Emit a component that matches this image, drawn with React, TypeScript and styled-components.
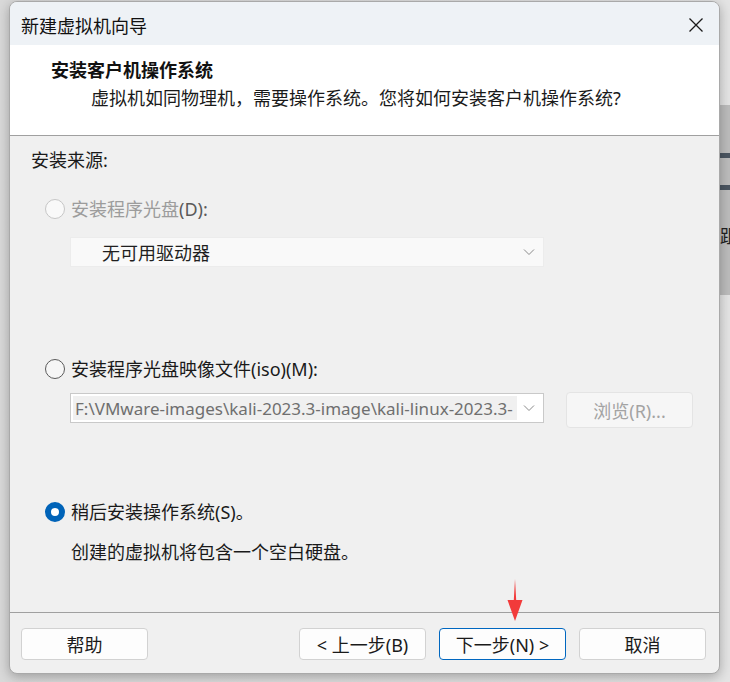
import React from "react";
import styled, { createGlobalStyle, css } from "styled-components";

const GlobalStyle = createGlobalStyle`
  html, body { margin: 0; padding: 0; }
  body {
    background: #e2e2e2;
    font-family: "Noto Sans", "Noto Sans CJK SC", sans-serif;
  }
  * { box-sizing: border-box; }
`;

const FONT = `"Noto Sans", "Noto Sans CJK SC", sans-serif`;

const Page = styled.div`
  position: relative;
  width: 730px;
  height: 682px;
  overflow: hidden;
  padding: 1px 0 0 9px;
  background: linear-gradient(90deg, #d9d9d9 0%, #e4e4e4 100%);
`;

const BackWindow = styled.div`
  position: absolute;
  left: 719px;
  top: 105px;
  width: 11px;
  height: 190px;
  overflow: hidden;
  background: #bcbcbc;
  display: flex;
  flex-direction: column;
  padding-top: 48px;
`;

const BackBar = styled.div<{ $mt: number }>`
  height: 5px;
  flex: none;
  margin-top: ${(p) => p.$mt}px;
  background: #4b5661;
`;

const BackGlyph = styled.div`
  margin-top: 33px;
  padding-left: 1px;
  font-family: "Noto Sans CJK SC", sans-serif;
  font-size: 18px;
  line-height: 24px;
  color: #222;
  white-space: nowrap;
`;

const Window = styled.div`
  position: relative;
  z-index: 1;
  width: 711px;
  height: 673px;
  border: 1px solid #a9a9a9;
  border-radius: 8px;
  overflow: hidden;
  display: flex;
  flex-direction: column;
  background: #f0f0f0;
  box-shadow: 0 3px 12px rgba(0, 0, 0, 0.28);
  font-family: ${FONT};
  color: #1a1a1a;
`;

const TitleBar = styled.div`
  height: 43px;
  flex: none;
  background: #eef2f6;
  display: flex;
  align-items: center;
  justify-content: space-between;
  padding: 2px 14px 0 11px;
`;

const TitleText = styled.div`
  font-family: "Noto Sans CJK SC", sans-serif;
  font-size: 18px;
  line-height: 24px;
  color: #111;
`;

const CloseButton = styled.div`
  width: 18px;
  height: 18px;
  display: flex;
  align-items: center;
  justify-content: center;
`;

const Header = styled.div`
  height: 91px;
  flex: none;
  background: #ffffff;
  border-bottom: 1px solid #a0a0a0;
  padding: 12px 0 0 41px;
  display: flex;
  flex-direction: column;
  gap: 5px;
`;

const HeaderTitle = styled.div`
  font-family: "Noto Sans CJK SC", sans-serif;
  font-size: 18px;
  font-weight: 700;
  line-height: 24px;
  color: #111;
`;

const HeaderSub = styled.div`
  font-size: 18px;
  line-height: 24px;
  padding-left: 40px;
  color: #1a1a1a;
`;

const Body = styled.div`
  flex: 1;
  padding: 12px 0 0 21px;
  display: flex;
  flex-direction: column;
`;

const Text = styled.div<{ $mt?: number; $indent?: number }>`
  font-size: 18px;
  line-height: 24px;
  margin-top: ${(p) => p.$mt ?? 0}px;
  padding-left: ${(p) => p.$indent ?? 0}px;
  color: #1a1a1a;
`;

const RadioRow = styled.div<{ $mt: number; $disabled?: boolean }>`
  display: flex;
  align-items: center;
  height: 24px;
  margin-top: ${(p) => p.$mt}px;
  padding-left: 14px;
  gap: 6px;
  font-size: 18px;
  line-height: 24px;
  color: ${(p) => (p.$disabled ? "#9c9c9c" : "#1a1a1a")};
`;

const Radio = styled.span<{ $state: "disabled" | "off" | "on" }>`
  width: 20px;
  height: 20px;
  border-radius: 50%;
  flex: none;
  ${(p) =>
    p.$state === "disabled"
      ? css`
          border: 1px solid #c6c6c6;
          background: #f9f9f9;
        `
      : p.$state === "off"
      ? css`
          border: 1px solid #5a5a5a;
          background: #f6f6f6;
        `
      : css`
          border: 6.5px solid #0063b8;
          background: #ffffff;
        `}
`;

const SubLabel = styled.span<{ $dark?: boolean }>`
  color: ${(p) => (p.$dark ? "#5a5a5a" : "inherit")};
`;

const ComboRow = styled.div<{ $mt: number }>`
  display: flex;
  align-items: flex-start;
  margin-top: ${(p) => p.$mt}px;
  padding-left: 39px;
  gap: 22px;
`;

const Combo = styled.div<{ $disabled?: boolean; $mt?: number }>`
  width: 474px;
  height: 30px;
  margin-top: ${(p) => p.$mt ?? 0}px;
  display: flex;
  align-items: center;
  padding: 2px 8px 2px 2px;
  border: 1px solid ${(p) => (p.$disabled ? "#ececec" : "#c9c9c9")};
  background: ${(p) => (p.$disabled ? "#f9f9f9" : "#ffffff")};
`;

const ComboValue = styled.div<{ $muted?: boolean; $field?: boolean }>`
  flex: ${(p) => (p.$field ? "none" : "1")};
  width: ${(p) => (p.$field ? "444px" : "auto")};
  height: 100%;
  display: flex;
  align-items: center;
  overflow: hidden;
  white-space: nowrap;
  padding-left: ${(p) => (p.$field ? 2 : 29)}px;
  background: ${(p) => (p.$field ? "#f0f0f0" : "transparent")};
  font-size: ${(p) => (p.$field ? 17 : 18)}px;
  color: ${(p) => (p.$muted ? "#6f6f6f" : "#1f1f1f")};
`;

const Chevron = styled.svg`
  margin-left: auto;
  flex: none;
`;

const BrowseButton = styled.div`
  width: 127px;
  height: 36px;
  display: flex;
  align-items: center;
  justify-content: center;
  border: 1px solid #e4e4e4;
  border-radius: 4px;
  background: #f6f6f6;
  font-size: 18px;
  color: #a3a3a3;
`;

const Footer = styled.div`
  height: 61px;
  flex: none;
  border-top: 1px solid #a0a0a0;
  display: flex;
  align-items: flex-start;
  padding: 15px 13px 0 11px;
  gap: 13px;
`;

const Button = styled.div<{ $primary?: boolean; $push?: boolean }>`
  width: 127px;
  height: 32px;
  display: flex;
  align-items: center;
  justify-content: center;
  border: 1px solid ${(p) => (p.$primary ? "#0067c0" : "#d2d2d2")};
  border-radius: 4px;
  background: #fdfdfd;
  font-size: 18px;
  color: #1a1a1a;
  margin-left: ${(p) => (p.$push ? "auto" : "0")};
`;

const Arrow = styled.svg`
  position: absolute;
  z-index: 2;
  left: 506px;
  top: 579px;
`;

const ChevronIcon = () => (
  <Chevron width="12" height="8" viewBox="0 0 12 8">
    <path d="M1 1.5 L6 6.5 L11 1.5" fill="none" stroke="#8a8a8a" strokeWidth="1" />
  </Chevron>
);

export default function App() {
  return (
    <>
      <GlobalStyle />
      <Page>
        <BackWindow>
          <BackBar $mt={0} />
          <BackBar $mt={27} />
          <BackGlyph>跙</BackGlyph>
        </BackWindow>
        <Window>
          <TitleBar>
            <TitleText>新建虚拟机向导</TitleText>
            <CloseButton>
              <svg width="16" height="16" viewBox="0 0 16 16">
                <path d="M1.5 1.5 L14.5 14.5 M14.5 1.5 L1.5 14.5" stroke="#1a1a1a" strokeWidth="1.3" fill="none" />
              </svg>
            </CloseButton>
          </TitleBar>
          <Header>
            <HeaderTitle>安装客户机操作系统</HeaderTitle>
            <HeaderSub>虚拟机如同物理机，需要操作系统。您将如何安装客户机操作系统?</HeaderSub>
          </Header>
          <Body>
            <Text>安装来源:</Text>
            <RadioRow $mt={25} $disabled>
              <Radio $state="disabled" />
              <span>
                安装程序光盘<SubLabel $dark>(D):</SubLabel>
              </span>
            </RadioRow>
            <ComboRow $mt={16}>
              <Combo $disabled>
                <ComboValue>无可用驱动器</ComboValue>
                <ChevronIcon />
              </Combo>
            </ComboRow>
            <RadioRow $mt={90}>
              <Radio $state="off" />
              <span>安装程序光盘映像文件(iso)(M):</span>
            </RadioRow>
            <ComboRow $mt={11}>
              <Combo $mt={1}>
                <ComboValue $field $muted>
                  F:\VMware-images\kali-2023.3-image\kali-linux-2023.3-
                </ComboValue>
                <ChevronIcon />
              </Combo>
              <BrowseButton>浏览(R)...</BrowseButton>
            </ComboRow>
            <RadioRow $mt={72}>
              <Radio $state="on" />
              <span>稍后安装操作系统(S)。</span>
            </RadioRow>
            <Text $mt={16} $indent={40}>
              创建的虚拟机将包含一个空白硬盘。
            </Text>
          </Body>
          <Footer>
            <Button>帮助</Button>
            <Button $push>&lt; 上一步(B)</Button>
            <Button $primary>下一步(N) &gt;</Button>
            <Button>取消</Button>
          </Footer>
        </Window>
        <Arrow width="18" height="42" viewBox="0 0 18 42">
          <path d="M9 0 L10.2 21 L16.5 21 L9 42 L1.5 21 L7.8 21 Z" fill="#f23b3b" />
        </Arrow>
      </Page>
    </>
  );
}
